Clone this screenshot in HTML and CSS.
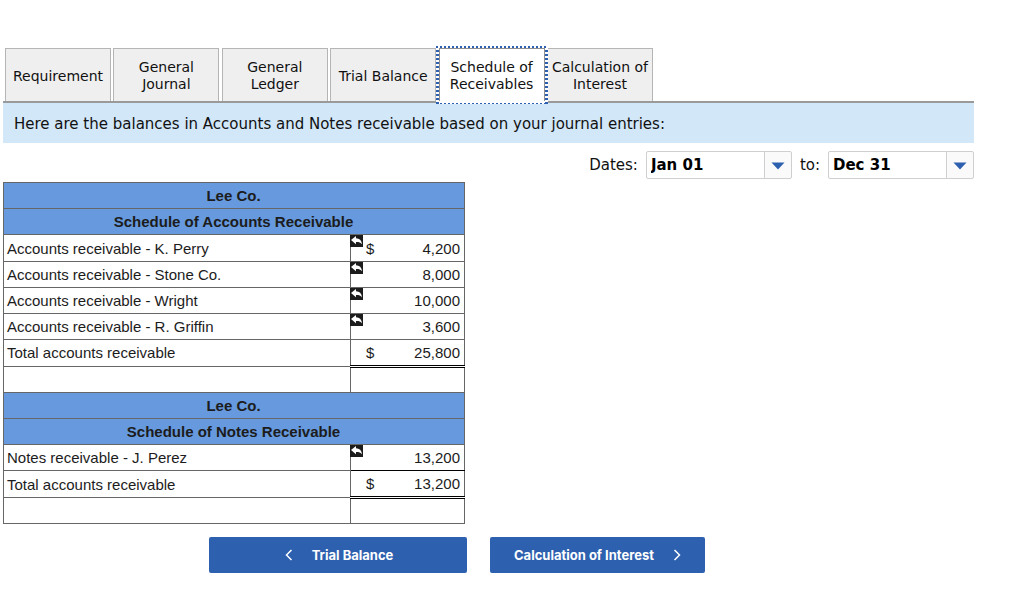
FILE: index.html
```html
<!DOCTYPE html>
<html lang="en">
<head>
<meta charset="utf-8">
<title>Schedule of Receivables</title>
<link rel="stylesheet" href="styles.css">
</head>
<body>
<svg class="sprite" aria-hidden="true">
  <symbol id="reply" viewBox="0 0 13 12">
    <path d="M1 5 6 1v2.300c3.400.1 5.700 2.200 6 6-1.400-1.700-3.200-2.300-6-2.200V9.200z" fill="#fff"/>
  </symbol>
</svg>
<main class="sheet">
  <nav class="tabs" role="tablist">
    <button class="tab" role="tab">Requirement</button>
    <button class="tab" role="tab">General Journal</button>
    <button class="tab" role="tab">General Ledger</button>
    <button class="tab" role="tab">Trial Balance</button>
    <button class="tab tab-active" role="tab" aria-selected="true">Schedule of Receivables</button>
    <button class="tab" role="tab">Calculation of Interest</button>
  </nav>
  <p class="intro">Here are the balances in Accounts and Notes receivable based on your journal entries:</p>
  <div class="dates">
    <label for="from">Dates:</label>
    <span class="picker">
      <select id="from"><option>Jan 01</option></select>
      <svg class="arrow" viewBox="0 0 14 8"><path d="M.5.5h13L7 7.500z" fill="#2d60ae"/></svg>
    </span>
    <label for="to">to:</label>
    <span class="picker">
      <select id="to"><option>Dec 31</option></select>
      <svg class="arrow" viewBox="0 0 14 8"><path d="M.5.5h13L7 7.500z" fill="#2d60ae"/></svg>
    </span>
  </div>
  <table class="ledger">
    <colgroup><col><col class="amount-col"></colgroup>
    <tbody>
      <tr><th colspan="2">Lee Co.</th></tr>
      <tr><th colspan="2">Schedule of Accounts Receivable</th></tr>
      <tr><td>Accounts receivable - K. Perry</td><td class="amount"><svg class="mark"><use href="#reply"/></svg><div class="money"><span>$</span><span>4,200</span></div></td></tr>
      <tr><td>Accounts receivable - Stone Co.</td><td class="amount"><svg class="mark"><use href="#reply"/></svg><div class="money"><span></span><span>8,000</span></div></td></tr>
      <tr><td>Accounts receivable - Wright</td><td class="amount"><svg class="mark"><use href="#reply"/></svg><div class="money"><span></span><span>10,000</span></div></td></tr>
      <tr><td>Accounts receivable - R. Griffin</td><td class="amount"><svg class="mark"><use href="#reply"/></svg><div class="money"><span></span><span>3,600</span></div></td></tr>
      <tr><td>Total accounts receivable</td><td class="amount total"><div class="money"><span>$</span><span>25,800</span></div></td></tr>
      <tr><td></td><td></td></tr>
      <tr><th colspan="2">Lee Co.</th></tr>
      <tr><th colspan="2">Schedule of Notes Receivable</th></tr>
      <tr><td>Notes receivable - J. Perez</td><td class="amount subtotal"><svg class="mark"><use href="#reply"/></svg><div class="money"><span></span><span>13,200</span></div></td></tr>
      <tr><td>Total accounts receivable</td><td class="amount total"><div class="money"><span>$</span><span>13,200</span></div></td></tr>
      <tr><td></td><td></td></tr>
    </tbody>
  </table>
  <div class="pager">
    <button class="step step-back"><svg class="chevron" viewBox="0 0 8 12"><path d="M6.500 1 1.500 6l5 5"/></svg>Trial Balance</button>
    <button class="step step-next">Calculation of Interest<svg class="chevron" viewBox="0 0 8 12"><path d="m1.500 1 5 5-5 5"/></svg></button>
  </div>
</main>
</body>
</html>
```
FILE: styles.css
```css
* { box-sizing: border-box; }
body {
  margin: 0;
  background: #fff;
  color: #111;
  font: 14px/17px "DejaVu Sans", Verdana, sans-serif;
}
.sprite { display: none; }
.sheet { padding: 48px 50px 24px 3px; }

.tabs {
  display: flex;
  justify-content: space-between;
  max-width: 650px;
  padding-left: 2px;
}
.tab {
  width: 106px;
  height: 53px;
  padding: 2px 2px 0;
  border: 1px solid #b5b5b5;
  border-bottom: 0;
  background: #efefef;
  color: #111;
  font: inherit;
}
.tab-active {
  position: relative;
  background: #fff;
  border-color: #8f8f8f;
}
/* Focus ring: square dots on every side, open onto the panel below */
.tab-active::after {
  content: "";
  position: absolute;
  inset: -3px -4px;
  background:
    repeating-linear-gradient(90deg, #2d60ae 0 2px, #fff 2px 4px) top / 100% 2px no-repeat,
    repeating-linear-gradient(#2d60ae 0 2px, #fff 2px 4px) left / 3px 100% no-repeat,
    repeating-linear-gradient(#2d60ae 0 2px, #fff 2px 4px) right / 3px 100% no-repeat,
    repeating-linear-gradient(90deg, #2d60ae 0 2px, #fff 2px 4px) bottom / 100% 1px no-repeat,
    linear-gradient(#fff, #fff) bottom / 100% 3px no-repeat;
}
.intro {
  margin: 0;
  padding: 12px 11px 10px;
  border-top: 2px solid #9a9a9a;
  background: #d2e7f8;
  font-size: 15px;
  line-height: 18px;
}

.dates {
  display: flex;
  justify-content: flex-end;
  align-items: center;
  gap: 8px;
  padding: 8px 0 3px;
  font-size: 15px;
}
.picker { position: relative; }
.picker select {
  display: block;
  width: 146px;
  height: 28px;
  padding: 0 4px;
  appearance: none;
  border: 1px solid #cfcfcf;
  border-radius: 2px;
  background: linear-gradient(#cfcfcf, #cfcfcf) right 26px top / 1px 100% no-repeat,
    linear-gradient(#fafafa, #fafafa) right / 26px 100% no-repeat, #fff;
  color: #000;
  font: bold 15px "DejaVu Sans", Verdana, sans-serif;
}
.arrow {
  position: absolute;
  top: 11px;
  right: 7px;
  width: 14px;
  height: 8px;
  pointer-events: none;
}

.ledger {
  width: 462px;
  height: 342px;
  border-collapse: collapse;
  table-layout: fixed;
  color: #1c1c1c;
  font: 15px/17px "Liberation Sans", Arial, sans-serif;
}
.amount-col { width: 114px; }
.ledger th,
.ledger td {
  height: 26px;
  padding: 0 4px 0 3px;
  border: 1px solid #666;
  text-align: left;
}
.ledger th {
  background: #6699dd;
  text-align: center;
}
.ledger .amount { position: relative; }
.ledger .subtotal { border-bottom-color: #000; }
.ledger .total { border-bottom: 3px double #000; }
.money {
  display: flex;
  justify-content: space-between;
  padding-left: 12px;
}
.mark {
  position: absolute;
  top: 0;
  left: -1px;
  width: 13px;
  height: 12px;
  background: #1c1c1c;
}

.pager {
  display: flex;
  gap: 23px;
  padding: 13px 0 0 206px;
}
.step {
  display: flex;
  justify-content: center;
  align-items: center;
  height: 36px;
  border: 0;
  border-radius: 2px;
  background: #2d60ae;
  color: #fff;
  font: bold 13px/16px Inter, sans-serif;
  gap: 19px;
}
.step-back { width: 258px; padding-right: 4px; }
.step-next { width: 215px; }
.chevron {
  width: 8px;
  height: 12px;
  fill: none;
  stroke: #fff;
  stroke-width: 1.5;
}
```
